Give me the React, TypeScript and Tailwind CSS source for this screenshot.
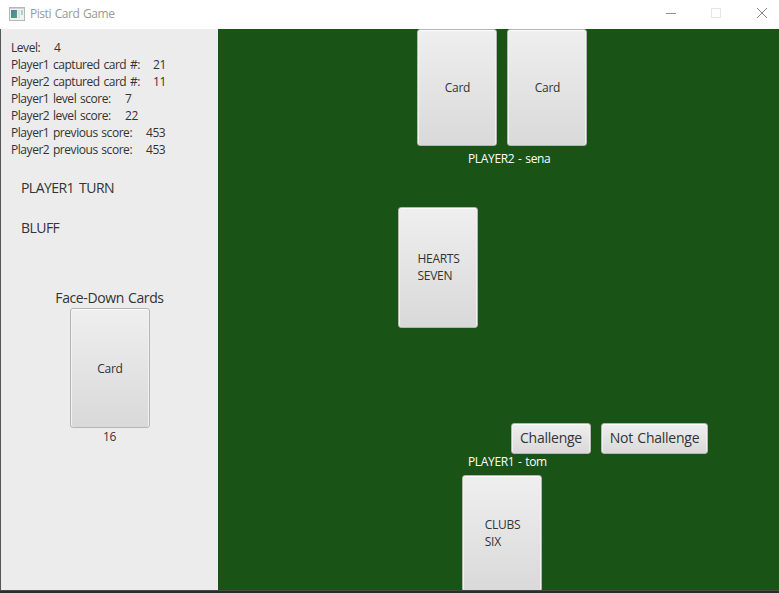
import type { ReactNode } from "react";

type Stat = { label: string; value: string; width: string };

const stats: Stat[] = [
  { label: "Level:", value: "4", width: "w-[43px]" },
  { label: "Player1 captured card #:", value: "21", width: "w-[142px]" },
  { label: "Player2 captured card #:", value: "11", width: "w-[142px]" },
  { label: "Player1 level score:", value: "7", width: "w-[114px]" },
  { label: "Player2 level score:", value: "22", width: "w-[114px]" },
  { label: "Player1 previous score:", value: "453", width: "w-[135px]" },
  { label: "Player2 previous score:", value: "453", width: "w-[135px]" },
];

const face =
  "rounded-[3px] border border-[#b5b5b5] bg-linear-to-b from-[#efefef] to-[#d9d9d9] shadow-[inset_0_1px_0_#fbfbfb,inset_1px_0_0_#f1f1f1,inset_-1px_0_0_#f1f1f1] text-[#333333] whitespace-nowrap";

function Card({ className = "", children }: { className?: string; children: ReactNode }) {
  return (
    <button className={`${face} flex w-20 shrink-0 items-center justify-center pl-px text-left text-[12px] leading-[17px] tracking-[-0.3px] ${className}`}>
      <span>{children}</span>
    </button>
  );
}

function TitleBar() {
  return (
    <header className="flex h-[29px] shrink-0 items-center bg-white pl-[9px]">
      <svg className="-mt-0.5" width="16" height="14" viewBox="0 0 16 14" shapeRendering="crispEdges">
        <defs>
          <linearGradient id="screen" x1="0" y1="0" x2="1" y2="1">
            <stop offset="0" stopColor="#477f9c" />
            <stop offset="1" stopColor="#55a579" />
          </linearGradient>
        </defs>
        <rect x=".5" y=".5" width="15" height="13" fill="#f1f1f1" stroke="#b5b8ba" />
        <rect x="1" y="1" width="14" height="1" fill="#cfd2d4" />
        <rect x="2" y="3" width="6" height="8" fill="url(#screen)" />
        <rect x="9" y="3" width="2" height="8" fill="#d8e2e6" />
        <rect x="12" y="3" width="2" height="5" fill="#b3ccd2" />
      </svg>
      <h1 className="-mt-px ml-[5px] grow text-[12px] leading-4 tracking-[-0.45px] [word-spacing:1px] text-[#999999]">Pisti Card Game</h1>
      <svg className="-mt-px shrink-0" width="120" height="28" viewBox="0 0 120 28" fill="none">
        <path d="M7 13.5h10" stroke="#929292" />
        <rect x="52.5" y="8.5" width="9" height="9" stroke="#e6e6e6" />
        <path d="M98 8l10 10M108 8l-10 10" stroke="#858585" />
      </svg>
    </header>
  );
}

function Sidebar() {
  return (
    <aside className="flex w-[218px] shrink-0 flex-col border-l border-[#55575b] bg-[#ececec]">
      <dl className="pt-[10px] pl-[10px] text-[12px] leading-[17px] tracking-[-0.45px] [word-spacing:1px]">
        {stats.map((s) => (
          <div key={s.label} className="flex whitespace-nowrap">
            <dt className={s.width}>{s.label}</dt>
            <dd>{s.value}</dd>
          </div>
        ))}
      </dl>
      <div className="mt-5 flex flex-col gap-5 pl-5 text-[14px] leading-5 tracking-[-0.55px] [word-spacing:2px]">
        <p>PLAYER1 TURN</p>
        <p>BLUFF</p>
      </div>
      <div className="mt-[50px] flex flex-col items-center">
        <p className="text-[14px] leading-5 tracking-[-0.4px] [word-spacing:1px]">Face-Down Cards</p>
        <Card className="h-[120px]">Card</Card>
        <p className="text-[12px] leading-[17px] tracking-[-0.3px]">16</p>
      </div>
    </aside>
  );
}

function Table() {
  return (
    <main className="flex min-w-0 grow flex-col overflow-hidden bg-[#1a5316]">
      <div className="ml-[199px] flex gap-[10px]">
        <Card className="h-[117px]">Card</Card>
        <Card className="h-[117px]">Card</Card>
      </div>
      <p className="mt-1 ml-[250px] text-[12px] leading-[17px] tracking-[-0.35px] [word-spacing:1px] text-white">PLAYER2 - sena</p>
      <div className="mt-10 ml-[180px] flex">
        <Card className="h-[121px] pb-0.5">
          HEARTS
          <br />
          SEVEN
        </Card>
      </div>
      <div className="mt-[95px] ml-[293px] flex gap-[10px] text-[14px] leading-5 tracking-[-0.25px]">
        <button className={`${face} h-[31px] w-20 pb-px`}>Challenge</button>
        <button className={`${face} h-[31px] w-[107px] pb-px [word-spacing:1px]`}>Not Challenge</button>
      </div>
      <p className="-mt-px ml-[250px] text-[12px] leading-[17px] tracking-[-0.35px] [word-spacing:1px] text-white">PLAYER1 - tom</p>
      <div className="mt-[5px] ml-[244px] flex">
        <Card className="h-[117px] pb-0.5">
          CLUBS
          <br />
          SIX
        </Card>
      </div>
    </main>
  );
}

export default function App() {
  return (
    <div className="flex h-[593px] w-[779px] flex-col overflow-hidden bg-[#2b2b2b] font-['Open_Sans','Noto_Sans',sans-serif] text-[#333333]">
      <TitleBar />
      <div className="flex h-[561px] shrink-0">
        <Sidebar />
        <Table />
      </div>
      <div className="h-px shrink-0 bg-[#4a4a4a]" />
    </div>
  );
}
